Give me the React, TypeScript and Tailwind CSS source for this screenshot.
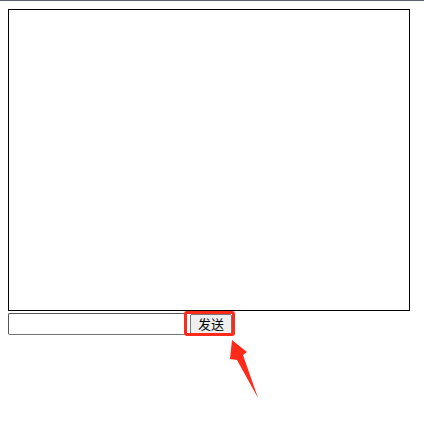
export default function App() {
  return (
    <div className="relative h-[424px] w-[424px] overflow-hidden bg-white font-['Liberation_Sans','Noto_Sans_CJK_SC',sans-serif]">
      <div className="h-px w-full bg-[#5a6270]" />
      <div className="px-2 pt-2">
        <div className="h-[302px] w-[402px] border border-black bg-white" />
        <div className="mt-[2px] flex items-center">
          <input
            type="text"
            className="h-[22px] w-[177px] rounded-[2px] border border-[#767676] border-t-[#555] border-l-[#555] bg-white px-1 text-[13px] outline-none"
          />
          <button className="ml-[5px] h-[21px] w-[42px] rounded-[2px] border border-[#767676] bg-[#efefef] text-[13px] leading-none text-black">
            发送
          </button>
        </div>
      </div>
      {/* annotation overlay */}
      <div className="pointer-events-none absolute left-[184px] top-[311px] h-[25px] w-[51px] rounded-[3px] border-[3px] border-[#ff2a1a]" />
      <svg className="pointer-events-none absolute left-0 top-0" width="424" height="424" viewBox="0 0 424 424">
        <polygon points="232,340 247,352 243,355 258,398 237,360 230,359" fill="#ff2a1a" />
      </svg>
    </div>
  );
}
